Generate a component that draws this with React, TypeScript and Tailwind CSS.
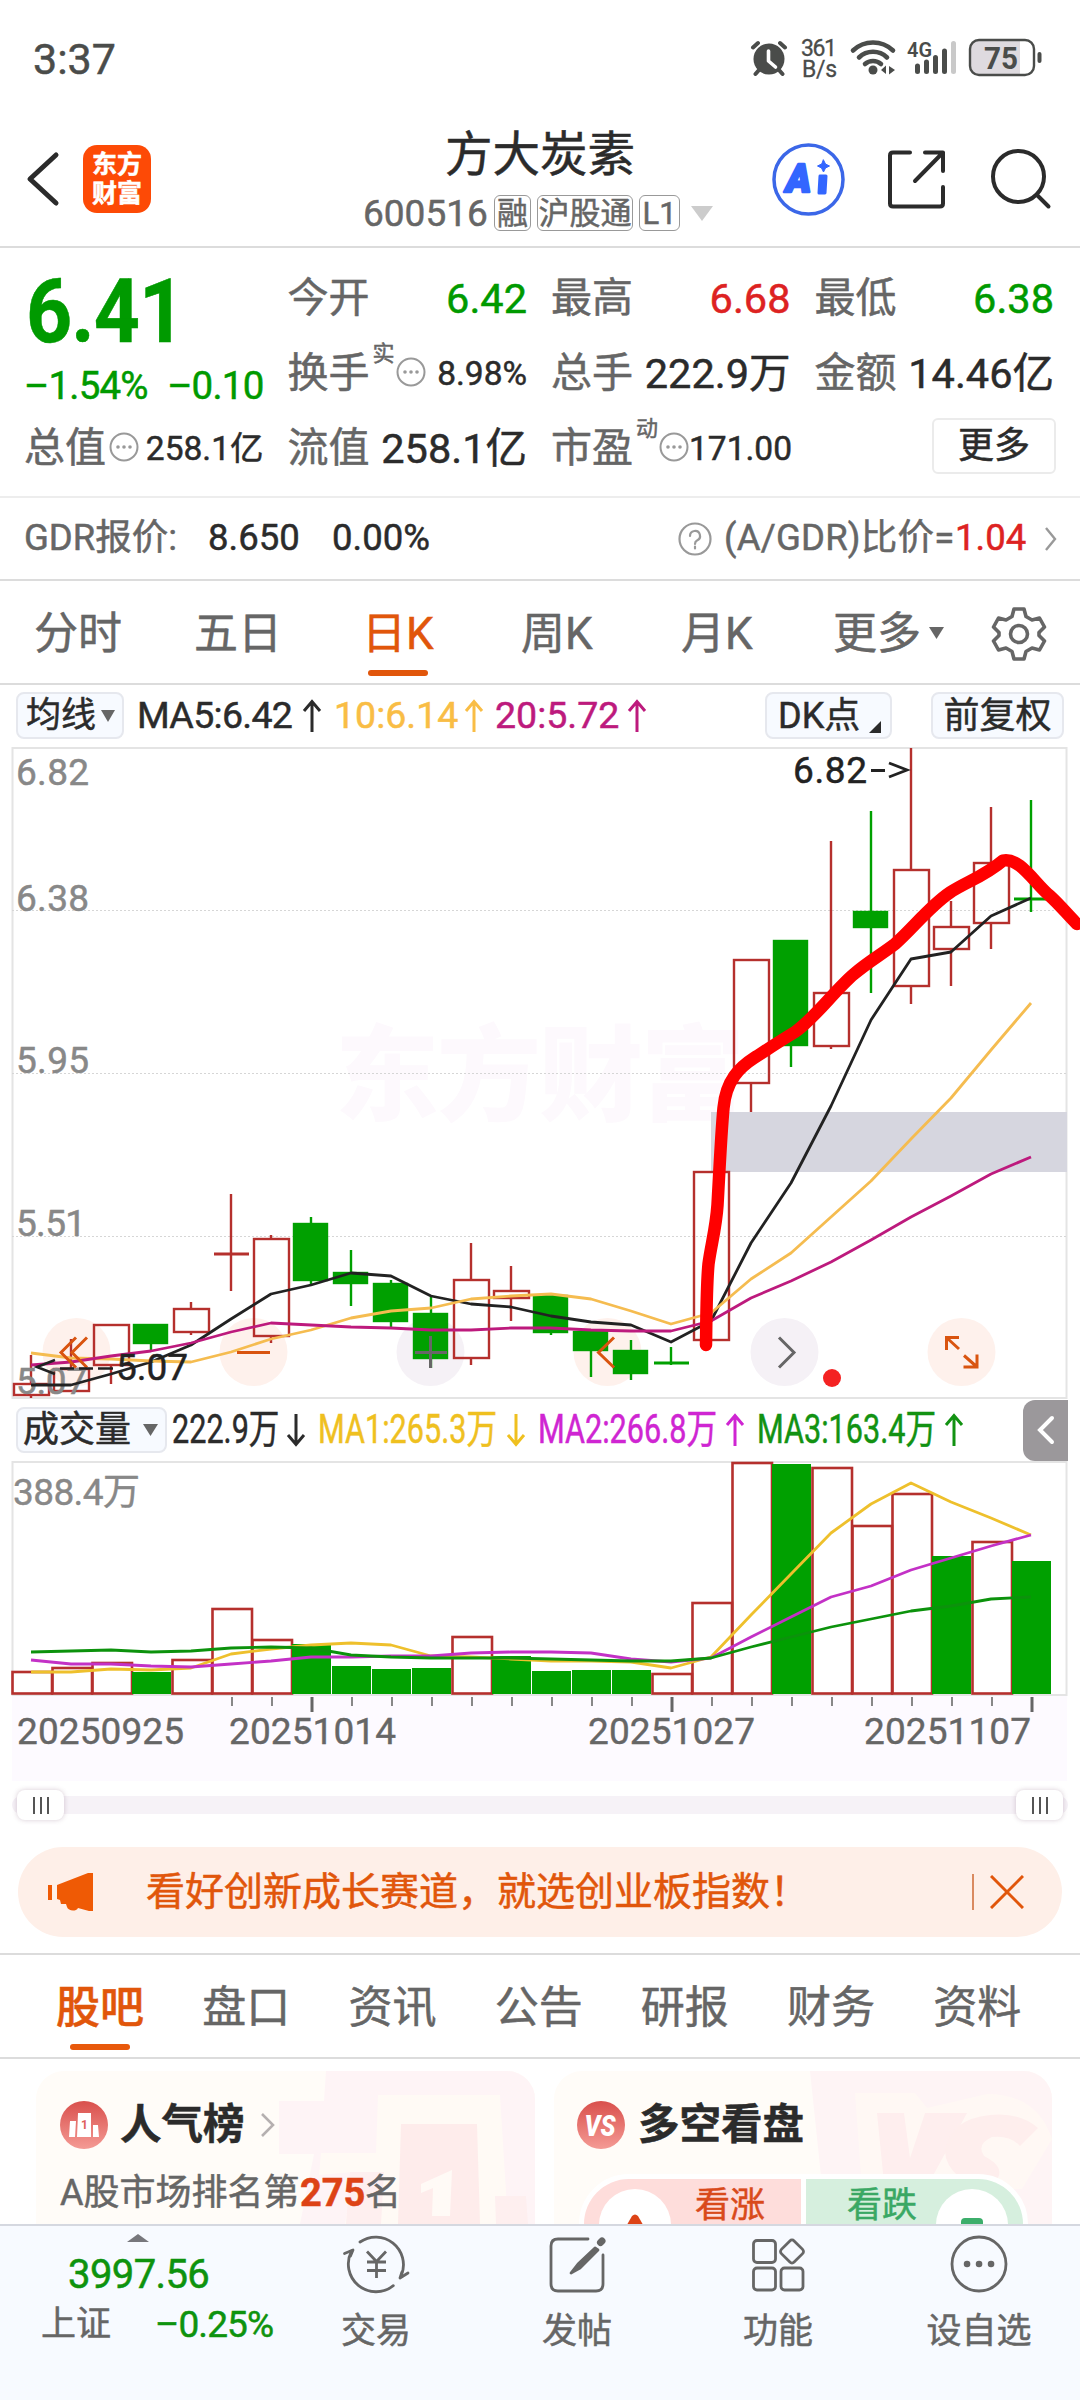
import type { ReactNode } from "react";
import clsx from "clsx";

const UP = "#b5302d";
const DOWN = "#00a000";

// x centre of every trading day, 40px apart
const dayX = (i: number) => 31 + i * 40;

type Candle = { up: boolean; top: number; bottom: number; high: number; low: number };

const candles: Candle[] = [
  { up: true, top: 1384, bottom: 1395, high: 1355, low: 1398 },
  { up: true, top: 1369, bottom: 1391, high: 1339, low: 1391 },
  { up: true, top: 1325, bottom: 1365, high: 1325, low: 1384 },
  { up: false, top: 1325, bottom: 1343, high: 1325, low: 1350 },
  { up: true, top: 1309, bottom: 1332, high: 1302, low: 1335 },
  { up: true, top: 1254, bottom: 1254, high: 1194, low: 1291 },
  { up: true, top: 1239, bottom: 1336, high: 1235, low: 1343 },
  { up: false, top: 1224, bottom: 1280, high: 1217, low: 1286 },
  { up: false, top: 1273, bottom: 1283, high: 1250, low: 1306 },
  { up: false, top: 1284, bottom: 1321, high: 1280, low: 1327 },
  { up: false, top: 1314, bottom: 1358, high: 1297, low: 1368 },
  { up: true, top: 1280, bottom: 1358, high: 1243, low: 1365 },
  { up: true, top: 1291, bottom: 1298, high: 1266, low: 1321 },
  { up: false, top: 1296, bottom: 1332, high: 1296, low: 1335 },
  { up: false, top: 1332, bottom: 1350, high: 1332, low: 1377 },
  { up: false, top: 1351, bottom: 1373, high: 1340, low: 1380 },
  { up: false, top: 1363, bottom: 1363, high: 1347, low: 1365 },
  { up: true, top: 1172, bottom: 1340, high: 1172, low: 1340 },
  { up: true, top: 960, bottom: 1083, high: 960, low: 1112 },
  { up: false, top: 941, bottom: 1045, high: 941, low: 1067 },
  { up: true, top: 993, bottom: 1046, high: 841, low: 1049 },
  { up: false, top: 912, bottom: 927, high: 811, low: 993 },
  { up: true, top: 870, bottom: 986, high: 748, low: 1004 },
  { up: true, top: 927, bottom: 949, high: 901, low: 986 },
  { up: true, top: 863, bottom: 923, high: 807, low: 949 },
  { up: false, top: 899, bottom: 899, high: 800, low: 912 },
];

const ma5 = [1385, 1385, 1374, 1362, 1345, 1319, 1294, 1285, 1273, 1276, 1296, 1304, 1307, 1316, 1322, 1325, 1342, 1321, 1243, 1183, 1106, 1020, 959, 952, 916, 898];
const ma10 = [1353, 1358, 1359, 1361, 1362, 1352, 1339, 1330, 1318, 1311, 1308, 1299, 1296, 1294, 1299, 1311, 1324, 1313, 1279, 1253, 1217, 1181, 1139, 1098, 1050, 1003];
const ma20 = [1365, 1362, 1356, 1351, 1343, 1332, 1323, 1325, 1327, 1328, 1330, 1330, 1328, 1328, 1330, 1331, 1331, 1321, 1298, 1281, 1262, 1240, 1217, 1196, 1174, 1157];

const volumeTops = [1672, 1668, 1663, 1672, 1660, 1609, 1640, 1644, 1666, 1669, 1668, 1637, 1656, 1671, 1670, 1670, 1674, 1603, 1463, 1464, 1468, 1526, 1494, 1556, 1542, 1561];
const volumeDown = [3, 7, 8, 9, 10, 12, 13, 14, 15, 19, 23, 25];
const vol1 = [1672, 1672, 1669, 1670, 1668, 1654, 1649, 1645, 1643, 1645, 1656, 1657, 1659, 1661, 1661, 1662, 1668, 1657, 1615, 1574, 1533, 1504, 1483, 1502, 1518, 1535];
const vol2 = [1660, 1664, 1664, 1666, 1667, 1664, 1661, 1657, 1657, 1656, 1656, 1653, 1652, 1652, 1653, 1659, 1662, 1658, 1637, 1617, 1597, 1586, 1570, 1558, 1546, 1535];
const vol3 = [1652, 1651, 1650, 1652, 1651, 1648, 1647, 1648, 1655, 1657, 1658, 1658, 1658, 1659, 1660, 1661, 1661, 1658, 1647, 1637, 1627, 1619, 1611, 1606, 1599, 1597];

const linePoints = (ys: number[]) => ys.map((y, i) => `${dayX(i)},${y}`).join(" ");

const StatusBar = () => (
  <div className="flex h-[100px] items-start justify-between pl-[33px] text-[#4a4c4a]">
    <span className="mt-[38px] text-[43px] leading-none">3:37</span>
    <svg width="340" height="60" viewBox="740 25 340 60" className="mt-[25px]" fill="none">
      <circle cx="769" cy="59" r="15.5" fill="#4a4c4a" />
      <path d="M768.5 51v10l7 6" stroke="#fff" strokeWidth="3.6" strokeLinecap="round" strokeLinejoin="round" />
      <path d="M753 47.5l5-4.500M785 47.500l-5-4.500M759 70l-3.500 4M779 70l3.500 4" stroke="#4a4c4a" strokeWidth="4" strokeLinecap="round" />
      <text x="801" y="56" fontSize="23" fill="#4a4c4a" stroke="#4a4c4a" strokeWidth="0.300" textLength="36">361</text>
      <text x="802" y="77" fontSize="23" fill="#4a4c4a" stroke="#4a4c4a" strokeWidth="0.300" textLength="35">B/s</text>
      <g stroke="#4a4c4a" strokeWidth="4.600" strokeLinecap="round">
        <path d="M853 50.500a29 29 0 0 1 40 0" />
        <path d="M859 57.500a20 20 0 0 1 28 0" />
        <path d="M865 64a12 12 0 0 1 16 0" />
      </g>
      <circle cx="873" cy="70" r="4.500" fill="#4a4c4a" />
      <path d="M881 70l5-4.500v8.500zM889 66l6 4-6 4.500z" fill="#4a4c4a" />
      <text x="907" y="57" fontSize="21" fontWeight="600" fill="#4a4c4a" textLength="25" lengthAdjust="spacingAndGlyphs">4G</text>
      <g stroke="#4a4c4a" strokeWidth="5" strokeLinecap="round">
        <path d="M917.500 66v5.500M926.500 62v9.500M935.500 57.500v14M944.500 51v20.500" />
        <path d="M953.500 43.500v28" stroke="#c9c9c9" />
      </g>
      <path d="M979 40.500h41v34h-41a8 8 0 0 1-8-8v-18a8 8 0 0 1 8-8z" fill="#dedadf" />
      <rect x="970" y="40" width="64" height="35" rx="9" stroke="#4a4c4a" strokeWidth="2.400" />
      <text x="984" y="69" fontSize="31" fontWeight="700" fill="#4a4c4a" textLength="34" lengthAdjust="spacingAndGlyphs">75</text>
      <path d="M1039.500 54v7" stroke="#4a4c4a" strokeWidth="4" strokeLinecap="round" />
    </svg>
  </div>
);

const Tag = ({ children, className }: { children: ReactNode; className: string }) => (
  <span className={clsx("flex h-9 items-center justify-center rounded-md border-[1.5px] border-[#999] text-[31px] leading-none", className)}>
    {children}
  </span>
);

const Header = () => (
  <header className="flex h-[148px] border-b-2 border-[#dcdcdc]">
    {/* BACK + LOGO */}
    <div className="flex w-[330px] shrink-0 items-start pl-[25px]">
      <svg width="36" height="60" viewBox="0 0 36 60" className="mt-[49px]" fill="none" stroke="#2b2b2b" strokeWidth="5" strokeLinecap="round" strokeLinejoin="round">
        <path d="M31 6L5 30l26 24" />
      </svg>
      <div className="ml-[22px] mt-[45px] flex h-[68px] w-[68px] flex-col items-center justify-center rounded-[14px] bg-[#fd4a06] text-[25px] font-bold leading-[29px] text-white">
        <span>东方</span>
        <span>财富</span>
      </div>
    </div>

    {/* STOCK NAME */}
    <div className="w-[420px] shrink-0">
      <div className="mt-[30px] text-center text-[47.500px] leading-[50px] text-[#2b2b2b]">方大炭素</div>
      <div className="mt-[15px] flex h-9 items-center whitespace-nowrap pl-[33px] text-[#666]">
        <span className="w-[131px] text-[37px] leading-none">600516</span>
        <Tag className="w-[37px]">融</Tag>
        <Tag className="ml-[6px] w-[96px]">沪股通</Tag>
        <Tag className="ml-[6px] w-[41px]">L1</Tag>
        <svg width="22" height="15" viewBox="0 0 22 15" className="ml-[11px]">
          <path d="M0 0h22L11 15z" fill="#ccc" />
        </svg>
      </div>
    </div>

    {/* ACTIONS */}
    <svg width="330" height="90" viewBox="750 135 330 90" className="mt-[35px]" fill="none" strokeLinecap="round" strokeLinejoin="round">
      <circle cx="808.500" cy="179.500" r="34.500" stroke="#3b67e8" strokeWidth="3.500" />
      <text x="786" y="191.500" fontSize="38" fontWeight="900" fontStyle="italic" fill="#3366ff" stroke="#3366ff" strokeWidth="2.500">A</text>
      <path d="M820 176h6l-1 17h-6z" fill="#3366ff" stroke="#3366ff" strokeWidth="3" />
      <path d="M823.500 160l2 4 4 2-4 2-2 4-2-4-4-2 4-2z" fill="#3366ff" stroke="#3366ff" />
      <g stroke="#2b2b2b" strokeWidth="4">
        <path d="M910 152.500h-17q-3 0-3 3v48q0 3 3 3h47q3 0 3-3v-16.500" />
        <path d="M925 152.500h18v18.500M943 152.500L915 181" />
        <circle cx="1018.500" cy="176.500" r="25.500" />
        <path d="M1037 195l11.500 11.500" />
      </g>
    </svg>
  </header>
);

const Dots = ({ className }: { className?: string }) => (
  <svg width="30" height="30" viewBox="0 0 30 30" className={clsx("shrink-0", className)} fill="#999">
    <circle cx="15" cy="15" r="13.500" fill="none" stroke="#999" strokeWidth="2" />
    <circle cx="9" cy="15" r="1.800" />
    <circle cx="15" cy="15" r="1.800" />
    <circle cx="21" cy="15" r="1.800" />
  </svg>
);

type QuoteProps = {
  label: string;
  value: string;
  sup?: string;
  dots?: boolean;
  small?: boolean;
  color?: string;
};

const Quote = ({ label, value, sup, dots, small, color = "text-[#2b2b2b]" }: QuoteProps) => (
  <div className="flex h-[75px] items-center whitespace-nowrap text-[41px] leading-none">
    <span className="-ml-[2px] text-[#666]">{label}</span>
    {sup && <span className="-mt-10 ml-[3px] text-[22px] text-[#666]">{sup}</span>}
    {dots && <Dots className={sup ? "ml-[1px] -mt-1" : "ml-[3px] -mt-1"} />}
    <span className={clsx("ml-auto", color, small ? "text-[33.500px]" : "text-[41.500px]")}>{value}</span>
  </div>
);

const Quotes = () => (
  <section className="grid h-[250px] grid-cols-4 gap-x-[26px] border-b-2 border-[#ededed] px-[26px] pt-[13px]">
    <div className="whitespace-nowrap text-[#009a00]">
      <div className="h-[100px] origin-left scale-x-[0.905] text-[89px] font-bold leading-[102px] tracking-[-1px]">6.41</div>
      <div className="flex h-[50px] items-center text-[38.500px] leading-none tracking-[-0.8px]">
        <span className="-ml-[2px] w-[147px]">–1.54%</span>
        <span>–0.10</span>
      </div>
      <Quote label="总值" value="258.1亿" dots small />
    </div>
    <div>
      <Quote label="今开" value="6.42" color="text-[#009a00]" />
      <Quote label="换手" sup="实" value="8.98%" dots small />
      <Quote label="流值" value="258.1亿" />
    </div>
    <div>
      <Quote label="最高" value="6.68" color="text-[#dd2222]" />
      <Quote label="总手" value="222.9万" />
      <Quote label="市盈" sup="动" value="171.00" dots small />
    </div>
    <div>
      <Quote label="最低" value="6.38" color="text-[#009a00]" />
      <Quote label="金额" value="14.46亿" />
      <div className="-mr-[2px] ml-auto mt-[7px] flex h-14 w-[124px] items-center justify-center rounded-md border-2 border-[#ebebeb] text-[36px] leading-none text-[#2b2b2b]">
        更多
      </div>
    </div>
  </section>
);

const GdrRow = () => (
  <section className="flex h-[83px] items-center whitespace-nowrap border-b-2 border-[#dcdcdc] pl-[24px] text-[36.500px] leading-none text-[#666]">
    <span className="w-[184px]">GDR报价:</span>
    <span className="w-[124px] text-[#2b2b2b]">8.650</span>
    <span className="w-[345px] text-[#2b2b2b]">0.00%</span>
    <svg width="36" height="36" viewBox="0 0 36 36" fill="none" stroke="#999" strokeWidth="2.200">
      <circle cx="18" cy="18" r="15.500" />
      <path d="M13 15a5 5 0 1 1 7 4.500q-2 1-2 3.500M18 25.500v2" strokeLinecap="round" />
    </svg>
    <span className="ml-[11px] w-[231px] tracking-[0.2px]">(A/GDR)比价=</span>
    <span className="w-[89px] text-[#dd2222]">1.04</span>
    <svg width="14" height="24" viewBox="0 0 14 24" fill="none" stroke="#999" strokeWidth="2.400">
      <path d="M2 1l9 11-9 11" />
    </svg>
  </section>
);

const PeriodTabs = () => (
  <nav className="flex h-[104px] items-start whitespace-nowrap border-b-2 border-[#dcdcdc] pl-[34px] pt-[31px] text-[44px] leading-[44px] text-[#666]">
    <span className="w-[160px]">分时</span>
    <span className="w-[168px]">五日</span>
    <span className="w-[159px] text-[#e1560b]">
      日K
      <i className="ml-[6px] mt-[14px] block h-[6px] w-[60px] rounded-full bg-[#e1560b]" />
    </span>
    <span className="w-[160px]">周K</span>
    <span className="w-[152px]">月K</span>
    <span>更多</span>
    <svg width="15" height="12" viewBox="0 0 15 12" className="ml-[8px] mt-[15px]">
      <path d="M0 0h15L7.500 12z" fill="#666" />
    </svg>
    <svg width="56" height="56" viewBox="0 0 56 56" className="ml-[47px] -mt-[7px]" fill="none" stroke="#666" strokeWidth="3.600" strokeLinejoin="round">
      <path d="M23 4h10l2 7.500 6 3.500 7.500-2 5 9-5.500 5.500v3l5.500 5.500-5 9-7.500-2-6 3.500-2 7.500H23l-2-7.500-6-3.500-7.500 2-5-9L8 30.500v-3L2.500 22l5-9 7.500 2 6-3.500z" />
      <circle cx="28" cy="29" r="8.500" />
    </svg>
  </nav>
);

const Arrow = ({ down, className }: { down?: boolean; className?: string }) => (
  <svg width="20" height="34" viewBox="0 0 20 34" className={clsx("shrink-0", down && "rotate-180", className)} fill="none" stroke="currentColor" strokeWidth="3">
    <path d="M10 33V3M2 12l8-9.500 8 9.500" />
  </svg>
);

const IndicatorRow = () => (
  <div className="flex h-[61px] items-center whitespace-nowrap pl-[16px] text-[37.500px] leading-none text-[#2b2b2b]">
    <div className="flex h-[47px] w-[108px] shrink-0 items-center rounded-lg border-2 border-[#e6e8ee] bg-[#f7faff] pl-2 text-[35px]">
      均线
      <svg width="14" height="12" viewBox="0 0 14 12" className="ml-[5px]">
        <path d="M0 0h14L7 12z" fill="#666" />
      </svg>
    </div>
    <span className="ml-[13px] w-[165px] tracking-[-0.700px]">MA5:6.42</span>
    <Arrow />
    <div className="ml-[12px] flex items-center text-[#f9bd45]">
      <span className="w-[130px]">10:6.14</span>
      <Arrow />
    </div>
    <div className="ml-[11px] flex items-center text-[#bd1a7d]">
      <span className="w-[132px]">20:5.72</span>
      <Arrow />
    </div>
    <div className="ml-[118px] flex h-[47px] w-[127px] shrink-0 items-center rounded-lg border-2 border-[#e6e8ee] bg-[#f7faff] pl-[11px] text-[36px]">
      DK点
      <svg width="12" height="12" viewBox="0 0 12 12" className="ml-[9px] mt-[22px]">
        <path d="M12 0v12H0z" fill="#2b2b2b" />
      </svg>
    </div>
    <div className="ml-[39px] flex h-[47px] w-[133px] shrink-0 items-center justify-center rounded-lg border-2 border-[#e6e8ee] bg-[#f7faff] text-[36px]">
      前复权
    </div>
  </div>
);

const KLineChart = () => (
  <svg width="1080" height="654" viewBox="0 746 1080 654" className="block" fill="none">
    <text x="335" y="1113" fontSize="104" fontWeight="900" fill="#fdf9fd" textLength="410">东方财富</text>
    <rect x="12.500" y="748" width="1054" height="650" stroke="#e4e4e4" strokeWidth="2" />
    <path d="M12 910.500h1055M12 1073.500h1055M12 1236.500h1055" stroke="#d6d6d6" strokeWidth="1" strokeDasharray="2 2" />
    <rect x="711" y="1112" width="356" height="60" fill="#d6d6df" />

    {/* ROUND CONTROLS */}
    <g fill="#fef1ec">
      <circle cx="76.500" cy="1352" r="34" />
      <circle cx="253.500" cy="1352" r="34" />
      <circle cx="430.500" cy="1352" r="34" fill="#f5f1f6" />
      <circle cx="607.500" cy="1352" r="34" />
      <circle cx="784.500" cy="1352" r="34" fill="#f5f1f6" />
      <circle cx="961.500" cy="1352" r="34" />
    </g>

    {candles.map((c, i) => {
      const x = dayX(i);
      const color = c.up ? UP : DOWN;
      const flat = c.top === c.bottom;
      return (
        <g key={i} stroke={color} strokeWidth="2.400">
          <path d={`M${x} ${c.high}V${flat ? c.low : c.top}M${x} ${c.bottom}V${c.low}`} />
          {flat ? (
            <path d={`M${x - 17} ${c.top}h35`} strokeWidth="2.800" />
          ) : (
            <rect
              x={x - 17}
              y={c.top}
              width={c.up ? 35 : 33}
              height={c.bottom - c.top}
              fill={c.up ? "none" : DOWN}
            />
          )}
        </g>
      );
    })}

    <g fontSize="37" fill="#888" stroke="#888" strokeWidth="0.500">
      <text x="16" y="785" textLength="73">6.82</text>
      <text x="16" y="911" textLength="73">6.38</text>
      <text x="16" y="1073" textLength="73">5.95</text>
      <text x="16" y="1236" textLength="70">5.51</text>
      <text x="16" y="1394" textLength="71">5.07</text>
    </g>

    <g strokeWidth="2.800" strokeLinejoin="round">
      <polyline points={linePoints(ma5)} stroke="#222" />
      <polyline points={linePoints(ma10)} stroke="#f5bc50" />
      <polyline points={linePoints(ma20)} stroke="#bd1a7d" />
    </g>

    <g stroke="#d9540f" strokeWidth="3">
      <path d="M76 1337.500l-15 15 15 15M87 1337.500l-15 15 15 15" />
      <path d="M237 1352.500h33" />
      <path d="M614 1337.500l-15.500 15 15.500 15" />
      <path d="M946.500 1350v-12.500h12.500M947 1338l12 11M977 1354.500v12.500h-13.500M976.500 1366.500l-12.500-11" />
    </g>
    <g stroke="#666" strokeWidth="3">
      <path d="M415 1352.500h32M430.500 1336v32" />
      <path d="M779 1337.500l15 15-15 15" />
    </g>
    <circle cx="832" cy="1378" r="9" fill="#f42222" />

    <path d="M55 1360l-18 7 18 7M60 1368.500h14M79 1368.500h14M98 1368.500h15" stroke="#222" strokeWidth="2.600" />
    <g fontSize="37" fill="#222" stroke="#222" strokeWidth="0.500">
      <text x="116" y="1380" textLength="72">5.07</text>
      <text x="793" y="783" textLength="74">6.82</text>
    </g>
    <path d="M871 770.500h14M889 763l18 7-18 7" stroke="#222" strokeWidth="2.800" />

    {/* HAND DRAWN TREND */}
    <path
      d="M706 1345C706.500 1310 706.500 1285 708.500 1264C711 1245 716 1228 717.500 1205C719.500 1170 721 1135 723.500 1108C726 1080 740 1067 754 1058C768 1049 780 1041 795 1032C815 1018 835 990 854 974C868 962 882 954 895 944C913 928 930 906 950 892.500C966 882 985 876 1003 860.500C1020 857 1035 884 1050 896C1059 904 1068 915 1077 924"
      stroke="#f00"
      strokeWidth="12.500"
      strokeLinecap="round"
      strokeLinejoin="round"
    />
  </svg>
);

const VolumeValue = ({ text, down, className, width }: { text: string; down?: boolean; className: string; width: string }) => (
  <div className={clsx("flex items-center", className)}>
    <span className={width}>
      <span className="inline-block origin-left scale-x-[0.765]">{text}</span>
    </span>
    <Arrow down={down} />
  </div>
);

const VolumeRow = () => (
  <div className="flex h-[60px] items-center whitespace-nowrap pl-[16px] text-[40px] leading-none text-[#2b2b2b]">
    <div className="flex h-[46px] w-[151px] shrink-0 items-center rounded-lg border-2 border-[#e6e8ee] bg-[#f7faff] pl-[5px] text-[36px]">
      成交量
      <svg width="15" height="12" viewBox="0 0 15 12" className="ml-[12px]">
        <path d="M0 0h15L7.500 12z" fill="#666" />
      </svg>
    </div>
    <VolumeValue text="222.9万" down className="ml-[5px] text-[#2b2b2b]" width="w-[114px]" />
    <VolumeValue text="MA1:265.3万" down className="ml-[12px] text-[#efc01f]" width="w-[188px]" />
    <VolumeValue text="MA2:266.8万" className="ml-[12px] text-[#cf25d2]" width="w-[187px]" />
    <VolumeValue text="MA3:163.4万" className="ml-[12px] text-[#129212]" width="w-[187px]" />
    <div className="ml-auto mr-[12px] flex h-[61px] w-[45px] items-center justify-center rounded-l-xl bg-[#9b989b]">
      <svg width="20" height="32" viewBox="0 0 20 32" fill="none" stroke="#fff" strokeWidth="4" strokeLinecap="round">
        <path d="M16 4L4 16l12 12" />
      </svg>
    </div>
  </div>
);

const dates = [
  { x: 17, label: "20250925" },
  { x: 229, label: "20251014" },
  { x: 588, label: "20251027" },
  { x: 864, label: "20251107" },
];

const VolumeChart = () => (
  <svg width="1080" height="322" viewBox="0 1460 1080 322" className="block" fill="none">
    <rect x="12" y="1695" width="1055" height="86" fill="#fdfaff" />
    <rect x="12.500" y="1462" width="1054" height="233" stroke="#e4e4e4" strokeWidth="2" />
    <text x="13" y="1505" fontSize="37" fill="#888" stroke="#888" strokeWidth="0.400" textLength="127">388.4万</text>
    {volumeTops.map((top, i) => {
      const x = 12 + i * 40;
      return volumeDown.includes(i) ? (
        <rect key={i} x={x} y={top} width="39" height={1694 - top} fill={DOWN} />
      ) : (
        <rect key={i} x={x + 0.5} y={top} width="39.500" height={1693.5 - top} stroke={UP} strokeWidth="2.600" />
      );
    })}
    <g strokeWidth="2.800" strokeLinejoin="round">
      <polyline points={linePoints(vol1)} stroke="#eec02c" />
      <polyline points={linePoints(vol2)} stroke="#c331c6" />
      <polyline points={linePoints(vol3)} stroke="#0c920c" />
    </g>
    {candles.map((_, i) => {
      if (i < 5) return null;
      const major = [7, 16, 25].includes(i);
      return <path key={i} d={`M${dayX(i) + 1} 1697v${major ? 15 : 9}`} stroke={major ? "#666" : "#888"} strokeWidth={major ? 3 : 2} />;
    })}
    {dates.map((d) => (
      <text key={d.label} x={d.x} y="1744" fontSize="37" fill="#666" stroke="#666" strokeWidth="0.400" textLength="167">
        {d.label}
      </text>
    ))}
  </svg>
);

const Handle = () => (
  <div className="flex h-[30px] w-[47px] items-center justify-center gap-[5px] rounded-lg bg-white shadow-[0_0_5px_rgba(120,80,110,0.3)]">
    <i className="h-[17px] w-[2px] bg-[#555]" />
    <i className="h-[17px] w-[2px] bg-[#555]" />
    <i className="h-[17px] w-[2px] bg-[#555]" />
  </div>
);

const RangeSlider = () => (
  <div className="h-[46px] px-3 pt-[14px]">
    <div className="flex h-[18px] items-center justify-between rounded-full bg-[#f6f2f7] px-[5px]">
      <Handle />
      <Handle />
    </div>
  </div>
);

const Banner = () => (
  <div className="h-[127px] border-b-2 border-[#dcdcdc] px-[18px] pt-[19px]">
    <div className="flex h-[90px] items-center rounded-full bg-[#feefe8] pl-[30px] text-[#e1560b]">
      <svg width="46" height="40" viewBox="0 0 46 40" fill="#ef5a05">
        <path d="M0 13h4v15H0zM9 13L40 1h5v38h-4l-11-3c-2 4-10 3-11-1l-1-3h-5l-1-4-3-1z" />
      </svg>
      <span className="ml-[52px] w-[826px] whitespace-nowrap text-[39px] leading-none">看好创新成长赛道，就选创业板指数！</span>
      <i className="h-9 w-[1.500px] bg-[#d98a60]" />
      <svg width="34" height="34" viewBox="0 0 34 34" className="ml-[16px]" fill="none" stroke="#e1560b" strokeWidth="3">
        <path d="M1 1l32 32M33 1L1 33" />
      </svg>
    </div>
  </div>
);

const sections = ["股吧", "盘口", "资讯", "公告", "研报", "财务", "资料"];

const SectionTabs = () => (
  <nav className="flex h-[104px] border-b-2 border-[#dcdcdc] pl-[27px] pt-[31px] text-[44px] leading-[44px]">
    {sections.map((name, i) => (
      <div key={name} className={clsx("w-[146.200px] text-center", i === 0 ? "font-medium text-[#e1560b]" : "text-[#666]")}>
        {name}
        {i === 0 && <i className="mx-auto mt-[14px] block h-[6px] w-[60px] rounded-full bg-[#e8590c]" />}
      </div>
    ))}
  </nav>
);

const Cards = () => (
  <section className="flex h-[165px] gap-[19px] overflow-hidden pl-[36px] pt-[12px]">
    {/* POPULARITY RANK */}
    <div className="relative h-[260px] w-[499px] shrink-0 overflow-hidden rounded-[28px] bg-[#fffcf8]">
      <svg width="499" height="153" viewBox="36 2071 499 153" className="absolute left-0 top-0">
        <path d="M326 2071h209v153H300l14-70h-35v-53h45z" fill="#fef4f6" />
        <path d="M378 2095h122l8 129H345l8-52-34 3 2-22h55z" fill="#fffaf5" />
        <path d="M401 2124h76l3 100h-82z" fill="#feeceb" />
        <path d="M350 2172h34l-3 52h-35zM495 2196h31l2 28h-32z" fill="#feefef" />
        <path d="M421 2184l31-14-2 46h-18l1-28-12 5z" fill="#fffaf6" />
      </svg>
      <div className="relative mt-[30px] flex h-[48px] items-center pl-[24px]">
        <svg width="48" height="48" viewBox="0 0 48 48">
          <defs>
            <linearGradient id="badge" x1="0" y1="0" x2="0" y2="1">
              <stop offset="0" stopColor="#d9504c" />
              <stop offset="1" stopColor="#f49a94" />
            </linearGradient>
          </defs>
          <circle cx="24" cy="24" r="24" fill="url(#badge)" />
          <path d="M10 20h6l-1 16H9zM18 12h13v24H17zM33 24h5l1 12h-6z" fill="#fff" />
          <text x="21" y="28" fontSize="12" fontWeight="700" fill="#e0605b">1</text>
        </svg>
        <span className="ml-[12px] whitespace-nowrap text-[41.500px] font-bold leading-none text-[#2b2b2b]">人气榜</span>
        <svg width="14" height="24" viewBox="0 0 14 24" className="ml-[16px]" fill="none" stroke="#b5b0b0" strokeWidth="2.600">
          <path d="M1 1l11 11L1 23" />
        </svg>
      </div>
      <div className="relative mt-[26px] flex whitespace-nowrap pl-[24px] text-[36px] leading-[36px] text-[#666]">
        <span className="w-[240px]">A股市场排名第</span>
        <span className="w-[65px] text-[38px] font-bold text-[#dd4316]">275</span>
        <span>名</span>
      </div>
    </div>

    {/* BULL / BEAR */}
    <div className="relative h-[260px] w-[498px] shrink-0 overflow-hidden rounded-[28px] bg-[#fffcf8]">
      <svg width="498" height="153" viewBox="554 2071 498 153" className="absolute left-0 top-0">
        <path d="M810 2071h242v153H826z" fill="#fef4f5" />
        <path d="M855 2093h60l12 15 60-14q50 0 65 45l-30 50h-160z" fill="#fff8f4" />
        <path d="M877 2113h27l6 45 15-45h42l-38 70h-45z" fill="#feeeee" />
        <path d="M1038 2128q-18-16-48-13-40 4-45 36 0 14 15 27h38q6-12-14-22-8-12 8-19 18-2 28 9z" fill="#feeeed" />
      </svg>
      <div className="relative mt-[30px] flex h-[48px] items-center pl-[23px]">
        <svg width="48" height="48" viewBox="0 0 48 48">
          <circle cx="24" cy="24" r="24" fill="url(#badge)" />
          <text x="7.500" y="35" fontSize="30" fontWeight="900" fontStyle="italic" fill="#fff" textLength="31" lengthAdjust="spacingAndGlyphs">VS</text>
        </svg>
        <span className="ml-[13px] whitespace-nowrap text-[41.500px] font-bold leading-none text-[#2b2b2b]">多空看盘</span>
      </div>
      <div className="relative ml-[25px] mt-[25px] flex h-[100px] w-[449px] gap-[5px] overflow-hidden rounded-[50px] border-[5px] border-white bg-white text-[35px] leading-none">
        <div className="flex flex-1 items-start bg-[#fedddb]">
          <div className="ml-[15px] mt-[10px] flex h-[72px] w-[72px] justify-center rounded-full bg-white pt-[25px]">
            <svg width="22" height="18" viewBox="0 0 22 18">
              <path d="M8 2q3-3 6 0l8 14H0z" fill="#dd4316" />
            </svg>
          </div>
          <span className="ml-[24px] mt-[9px] text-[#d94a1b]">看涨</span>
        </div>
        <div className="flex flex-1 items-start justify-end bg-[#d6efde]">
          <span className="mr-[19px] mt-[9px] text-[#3aa864]">看跌</span>
          <div className="mr-[15px] mt-[10px] flex h-[72px] w-[72px] justify-center rounded-full bg-white pt-[29px]">
            <i className="h-5 w-[22px] rounded-t bg-[#3cae6b]" />
          </div>
        </div>
      </div>
    </div>
  </section>
);

const NavItem = ({ label, className, children }: { label: string; className: string; children: ReactNode }) => (
  <div className={clsx("flex flex-col items-center pt-[8px] text-[35px] leading-none text-[#666]", className)}>
    <svg width="70" height="62" viewBox="0 0 70 62" fill="none" stroke="#666" strokeWidth="2.800" strokeLinecap="round" strokeLinejoin="round">
      {children}
    </svg>
    <span className="mt-[18px] whitespace-nowrap">{label}</span>
  </div>
);

const BottomNav = () => (
  <footer className="flex h-[176px] border-t-2 border-[#d5d8e0] bg-[#f7faff]">
    <div className="w-[300px] shrink-0 whitespace-nowrap text-[#0e930e]">
      <svg width="22" height="8" viewBox="0 0 22 8" className="ml-[127px] mt-[8px]">
        <path d="M11 0l11 8H0z" fill="#77777c" />
      </svg>
      <div className="ml-[68px] mt-[13px] text-[40px] leading-[40px] tracking-[-0.6px]">3997.56</div>
      <div className="ml-[41px] mt-[10px] flex text-[36px] leading-[40px]">
        <span className="w-[114px] text-[35px] text-[#666]">上证</span>
        <span className="text-[37px] tracking-[-0.9px]">–0.25%</span>
      </div>
    </div>
    <NavItem label="交易" className="w-[152px]">
      <path d="M19 8A27.700 27.700 0 0 1 60.500 41M52.300 51.700A27.700 27.700 0 0 1 10.600 17" />
      <path d="M3.500 19.500l8.500-3.500-2.500 6M67 39l-8 5 2-6" />
      <path d="M26 17.500l9.500 10 9.500-10M26 28h19M26 36.500h19M35.500 28v16" strokeLinecap="butt" />
    </NavItem>
    <NavItem label="发帖" className="ml-[50px] w-[150px]">
      <path d="M46 5H16q-7 0-7 7v38q0 7 7 7h38q7 0 7-7V21" />
      <path d="M60 7l-1.500 1.500" strokeWidth="7" />
      <path d="M53 14L36 30l-7 9 9-5 18-18z" fill="#666" />
    </NavItem>
    <NavItem label="功能" className="ml-[51px] w-[150px]">
      <rect x="10.500" y="6.500" width="22" height="22" rx="3.500" />
      <rect x="10.500" y="34" width="22" height="22" rx="3.500" />
      <rect x="38" y="34" width="22" height="22" rx="3.500" />
      <rect x="40" y="8.500" width="18" height="18" rx="3" transform="rotate(45 49 17.500)" />
    </NavItem>
    <NavItem label="设自选" className="ml-[50px] w-[152px]">
      <circle cx="35" cy="30" r="27" />
      <path d="M23 30h.1M35 30h.1M47 30h.1" strokeWidth="6.500" />
    </NavItem>
  </footer>
);

const App = () => (
  <main
    lang="zh-CN"
    className="h-[2400px] w-[1080px] overflow-hidden bg-white font-['Roboto','Noto_Sans_CJK_SC',sans-serif] [-webkit-text-stroke:0.5px]"
  >
    <StatusBar />
    <Header />
    <Quotes />
    <GdrRow />
    <PeriodTabs />
    <IndicatorRow />
    <KLineChart />
    <VolumeRow />
    <VolumeChart />
    <RangeSlider />
    <Banner />
    <SectionTabs />
    <Cards />
    <BottomNav />
  </main>
);

export default App;
